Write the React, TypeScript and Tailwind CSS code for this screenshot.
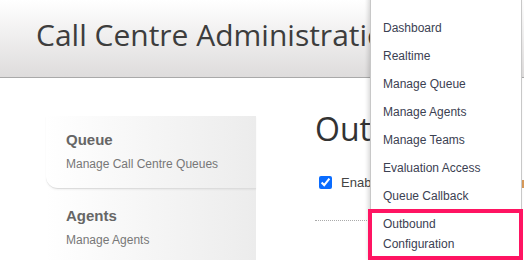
const menu = [
  'Dashboard',
  'Realtime',
  'Manage Queue',
  'Manage Agents',
  'Manage Teams',
  'Evaluation Access',
  'Queue Callback',
];

function SideItem({ title, desc, first }: { title: string; desc: string; first?: boolean }) {
  return (
    <div
      className={`pl-5 pt-[14px] h-[73px] ${
        first ? 'border-b border-[#dcdcdc] rounded-bl-xl shadow-[0_1px_2px_rgba(0,0,0,0.05)]' : ''
      }`}
    >
      <div className="text-[15px] font-bold text-[#666] leading-[20px]">{title}</div>
      <div className="text-[12px] text-[#777] leading-[16px] mt-[6px] whitespace-nowrap">{desc}</div>
    </div>
  );
}

export default function App() {
  return (
    <div
      className="relative w-[524px] h-[260px] overflow-hidden bg-white"
      style={{ fontFamily: '"Liberation Sans", Arial, sans-serif' }}
    >
      <header className="h-[78px] border-b border-[#a9a9a9] bg-gradient-to-b from-white to-[#dedcdc] pl-[36px] pt-[16px]">
        <h1
          className="text-[30px] text-[#3d3d3d] leading-[38px] whitespace-nowrap"
          style={{ fontFamily: '"Open Sans", sans-serif' }}
        >
          Call Centre Administration
        </h1>
      </header>

      <div className="flex">
        <aside className="shrink-0 ml-[46px] mt-[38px] w-[210px] h-[150px] bg-gradient-to-r from-white to-[#ececec]">
          <SideItem first title="Queue" desc="Manage Call Centre Queues" />
          <div className="pt-[3px]">
            <SideItem title="Agents" desc="Manage Agents" />
          </div>
        </aside>

        <main className="ml-[59px] mt-[31px] w-[55px] shrink-0 overflow-hidden">
          <h2
            className="text-[32px] text-[#333] leading-[40px] whitespace-nowrap"
            style={{ fontFamily: '"Open Sans", sans-serif' }}
          >
            Outbound Configuration
          </h2>
          <label className="mt-[24px] ml-[4px] flex items-center gap-[9px] text-[13px] text-[#444] whitespace-nowrap">
            <input type="checkbox" defaultChecked className="shrink-0 w-[13px] h-[13px] accent-[#0a6cff]" />
            Enable Outbound
          </label>
          <div className="mt-[27px] w-[200px] border-t border-dotted border-[#aaa]" />
        </main>
      </div>

      <div className="absolute left-[522px] top-[180px] w-[2px] h-[8px] bg-[#d89a5a]" />

      <nav className="absolute left-[370px] top-[-10px] w-[152px] h-[268px] bg-white border border-[#c8c8c8] shadow-[-2px_2px_4px_rgba(0,0,0,0.15)] pt-[23px]">
        {menu.map((m) => (
          <div key={m} className="h-[28px] pl-[12px] flex items-center text-[12px] text-[#3b4152]">
            {m}
          </div>
        ))}
        <div className="pl-[12px] pt-[4px] text-[12px] leading-[20px] text-[#3b4152]">
          Outbound
          <br />
          Configuration
        </div>
      </nav>

      <div className="absolute left-[368px] top-[209px] w-[155px] h-[51px] border-[4px] border-[#ff1462]" />
    </div>
  );
}
